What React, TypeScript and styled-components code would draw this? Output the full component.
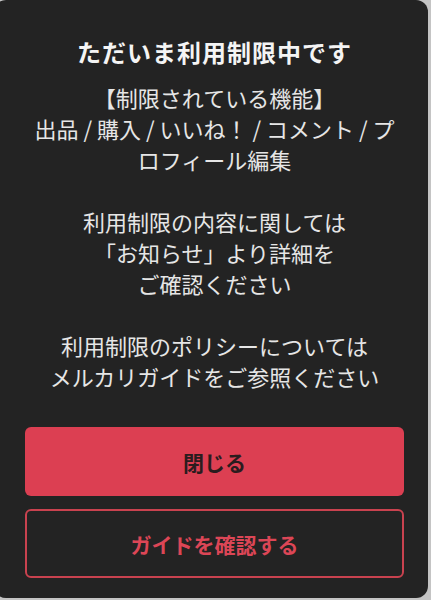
import React from "react";
import styled, { createGlobalStyle } from "styled-components";

const GlobalStyle = createGlobalStyle`
  html, body {
    margin: 0;
    padding: 0;
    background: #c4c4c4;
    overflow: hidden;
  }
  body {
    font-family: "Noto Sans CJK JP", "Noto Sans", sans-serif;
  }
`;

// Dark modal card; its left edge runs just past the window
const Card = styled.div`
  width: 434px;
  height: 598px;
  margin-left: -6px;
  box-sizing: border-box;
  background: #232323;
  border-radius: 12px;
  padding: 36px 24px 0 31px;
  display: flex;
  flex-direction: column;
  align-items: stretch;
`;

const Title = styled.h1`
  margin: 0;
  font-size: 24px;
  line-height: 32px;
  font-weight: 700;
  letter-spacing: 1px;
  color: #f4f4f4;
  text-align: center;
`;

const Body = styled.p`
  margin: 14px 0 0;
  font-size: 22px;
  line-height: 31px;
  font-weight: 400;
  color: #e6e6e6;
  text-align: center;
  white-space: nowrap;
`;

const Actions = styled.div`
  margin-top: 35px;
  display: flex;
  flex-direction: column;
  gap: 13px;
`;

const Button = styled.button<{ $outline?: boolean }>`
  height: 69px;
  border-radius: 6px;
  font-family: inherit;
  font-size: 21px;
  font-weight: 700;
  cursor: pointer;
  background: ${(p) => (p.$outline ? "transparent" : "#dc3f52")};
  color: ${(p) => (p.$outline ? "#dc4656" : "#2a1c1e")};
  border: ${(p) => (p.$outline ? "2px solid #c9424f" : "none")};
`;

const App: React.FC = () => {
  return (
    <>
      <GlobalStyle />
      <Card>
        <Title>ただいま利用制限中です</Title>
        <Body>
          【制限されている機能】
          <br />
          出品 / 購入 / いいね！ / コメント / プ
          <br />
          ロフィール編集
          <br />
          <br />
          利用制限の内容に関しては
          <br />
          「お知らせ」より詳細を
          <br />
          ご確認ください
          <br />
          <br />
          利用制限のポリシーについては
          <br />
          メルカリガイドをご参照ください
        </Body>
        <Actions>
          <Button>閉じる</Button>
          <Button $outline>ガイドを確認する</Button>
        </Actions>
      </Card>
    </>
  );
};

export default App;
